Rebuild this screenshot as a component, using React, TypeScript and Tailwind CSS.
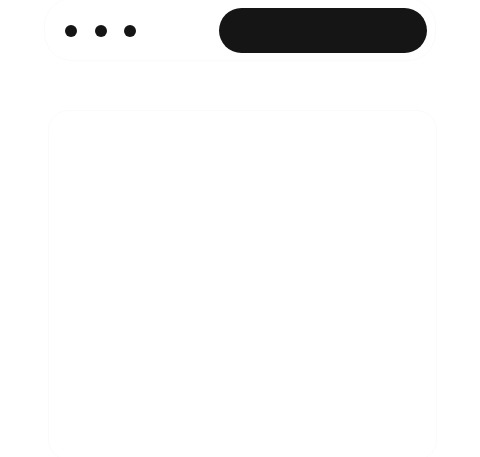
export default function App() {
  return (
    <div className="w-[480px] h-[457px] bg-white overflow-hidden" style={{ fontFamily: '"Liberation Sans", sans-serif' }}>
      <div className="ml-[44px] w-[392px] mt-[-2px] h-[63px] rounded-[28px] border border-[#fbfbfb] flex items-center justify-between pl-[20px] pr-[8px]">
        <div className="flex items-center gap-[17.5px] pt-[2px]">
          <span className="w-[12px] h-[12px] rounded-full bg-[#151515]" />
          <span className="w-[12px] h-[12px] rounded-full bg-[#151515]" />
          <span className="w-[12px] h-[12px] rounded-full bg-[#151515]" />
        </div>
        <div className="w-[208px] h-[45px] mt-[1px] rounded-full bg-[#151515]" />
      </div>
      <div className="ml-[48px] w-[389px] mt-[49px] h-[350px] rounded-[20px] border border-[#fbfbfb]" />
    </div>
  );
}
